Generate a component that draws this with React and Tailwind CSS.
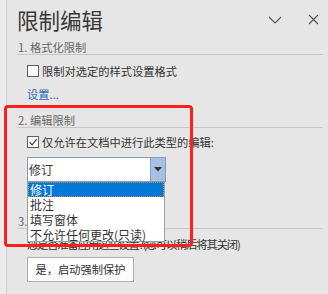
import { useState } from "react";

const font = { fontFamily: '"Noto Sans CJK SC", "Noto Sans", sans-serif' };

function Checkbox({ checked, label }) {
    return (
        <div className="flex items-center h-[14px] pl-[10px] gap-[3px]">
            <span className="w-[12px] h-[12px] border border-[#5f5f5f] bg-white flex items-center justify-center">
                {checked && (
                    <svg width="10" height="10" viewBox="0 0 10 10">
                        <path d="M1.5 5.2 L4 7.8 L8.8 2" fill="none" stroke="#333" strokeWidth="1.1" />
                    </svg>
                )}
            </span>
            <span className="text-[11.25px] leading-[14px] text-[#333] whitespace-nowrap">{label}</span>
        </div>
    );
}

function SectionTitle({ children, className = "" }) {
    return (
        <div className={`h-[15px] pl-[1px] border-b border-[#c8c8c8] text-[11.25px] leading-[14px] text-[#666] ${className}`}>
            {children}
        </div>
    );
}

export default function App() {
    const [options] = useState(["修订", "批注", "填写窗体", "不允许任何更改(只读)"]);

    return (
        <div className="relative w-[328px] h-[294px] bg-[#e6e6e6] flex overflow-hidden" style={font}>
            <div className="w-[7px] bg-[#ebebeb] border-r border-[#cdcdcd]"></div>
            <div className="flex-1 flex flex-col pl-[10px] pr-[5px]">
                <div className="flex items-center h-[38px] pt-[1px]">
                    <h1 className="text-[21.5px] leading-[22px] text-[#383838]">限制编辑</h1>
                    <svg className="ml-auto mr-[26px]" width="14" height="8" viewBox="0 0 14 8">
                        <path d="M1 1 L7 7 L13 1" fill="none" stroke="#555" strokeWidth="1.1" />
                    </svg>
                    <svg className="mr-[4px]" width="11" height="11" viewBox="0 0 11 11">
                        <path d="M1 1 L10 10 M10 1 L1 10" fill="none" stroke="#555" strokeWidth="1.1" />
                    </svg>
                </div>

                <SectionTitle className="mt-[2px]">1. 格式化限制</SectionTitle>
                <div className="mt-[9px]">
                    <Checkbox checked={false} label="限制对选定的样式设置格式" />
                </div>
                <div className="mt-[9px] pl-[10px] h-[14px] text-[11.25px] leading-[14px] text-[#2f6db5]">设置...</div>

                <SectionTitle className="mt-[12px]">2. 编辑限制</SectionTitle>
                <div className="mt-[7px]">
                    <Checkbox checked={true} label="仅允许在文档中进行此类型的编辑:" />
                </div>
                <div className="relative mt-[8px] ml-[10px] w-[139px]">
                    <div className="flex h-[25px] bg-white border border-[#8a9bb5]">
                        <span className="flex-1 pl-[1px] text-[12px] leading-[23px] text-[#333]">修订</span>
                        <span className="w-[15px] bg-[#a8c1e3] border-l border-[#7fa2d0] flex items-center justify-center">
                            <svg width="8" height="5" viewBox="0 0 8 5">
                                <path d="M0 0 L8 0 L4 4.5 Z" fill="#333" />
                            </svg>
                        </span>
                    </div>
                    <ul className="absolute left-0 top-full w-[138px] h-[60px] bg-white border border-[#a0a0a0] border-t-0 z-10">
                        {options.map((opt, i) => (
                            <li
                                key={opt}
                                className={
                                    i === 0
                                        ? "h-[14.5px] pl-[1px] text-[12px] leading-[13px] bg-[#0078d7] text-white border border-dotted border-[#c9904a]"
                                        : "h-[15px] pl-[2px] text-[12px] leading-[15px] text-[#333] whitespace-nowrap"
                                }
                            >
                                {opt}
                            </li>
                        ))}
                    </ul>
                </div>

                <SectionTitle className="mt-[32px]">3. 启动强制保护</SectionTitle>
                <div className="mt-[8px] pl-[10px] h-[14px] text-[11.25px] leading-[14px] tracking-[-1.1px] text-[#333] whitespace-nowrap">
                    您是否准备应用这些设置?(您可以稍后将其关闭)
                </div>
                <div className="mt-[4px] ml-[10px]">
                    <button className="w-[107px] h-[25px] bg-[#fdfdfd] border border-[#adadad] text-[11.25px] text-[#333]">
                        是，启动强制保护
                    </button>
                </div>
            </div>

            <div className="absolute left-[4px] top-[105px] w-[189px] h-[142px] border-[3px] border-[#ff1f1f] rounded-[4px] z-20 pointer-events-none"></div>
        </div>
    );
}
